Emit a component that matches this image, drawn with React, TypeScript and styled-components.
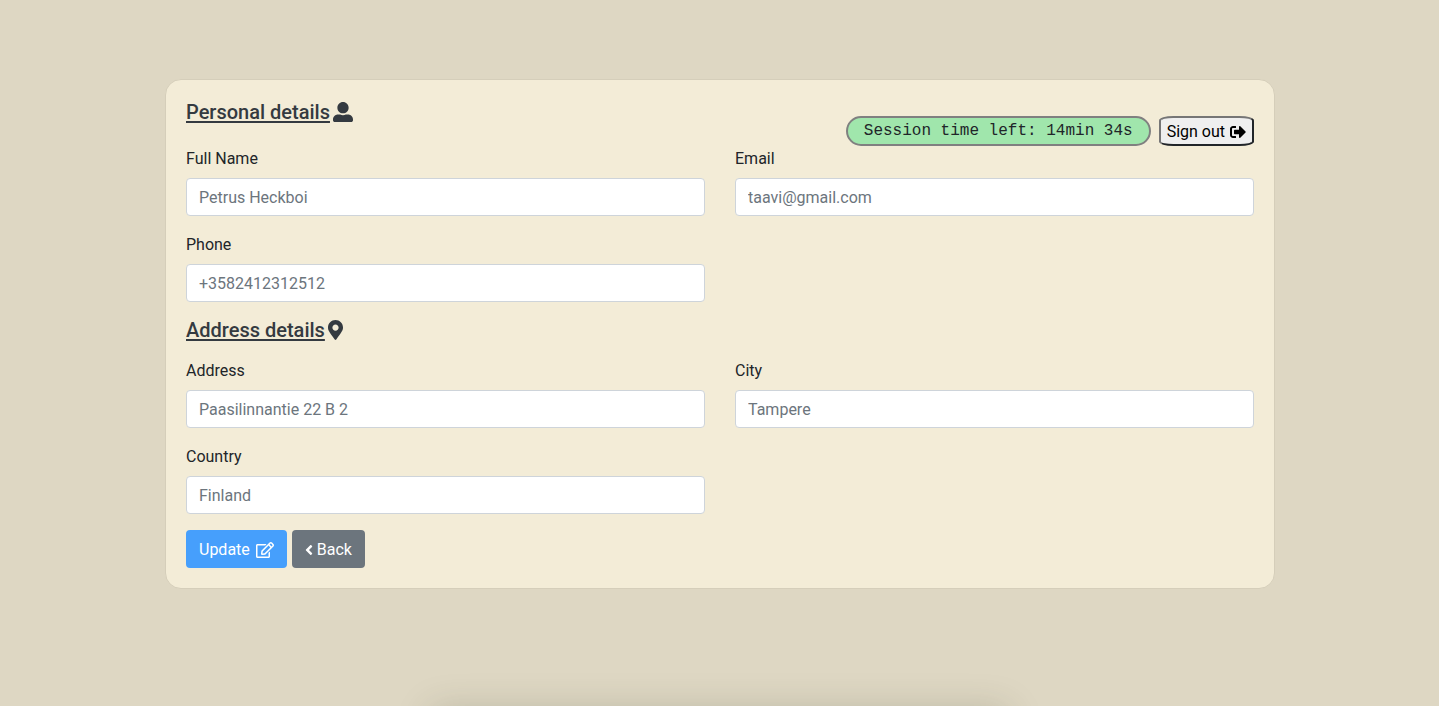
import type { FormEvent, ReactNode } from "react";
import styled, { createGlobalStyle } from "styled-components";
import { FaAngleLeft, FaMapMarkerAlt, FaRegEdit, FaSignOutAlt, FaUserAlt } from "react-icons/fa";

const GlobalStyle = createGlobalStyle`
  *, *::before, *::after { box-sizing: border-box; }
  html { height: 100%; }
  body {
    margin: 0;
    min-height: 100%;
    background: #ded7c3;
    color: #212529;
    font-family: Roboto, "Liberation Sans", sans-serif;
    font-size: 16px;
    line-height: 24px;
  }
`;

const Page = styled.div`
  position: relative;
  display: flex;
  justify-content: center;
  min-height: 100vh;
  padding: 79px 16px 79px 17px;
  overflow: hidden;
`;

const Card = styled.form`
  flex: 1;
  align-self: flex-start;
  max-width: 1110px;
  padding: 20px;
  background: #f3ecd7;
  border: 1px solid #d5ceba;
  border-radius: 16px;
`;

const Header = styled.header`
  display: flex;
  justify-content: space-between;
  min-height: 46px;
`;

const Heading = styled.h2`
  display: flex;
  align-items: center;
  gap: 3px;
  height: 24px;
  margin: 0;
  color: #343a40;
  font-size: 20px;
  font-weight: 500;
  line-height: 24px;
`;

const HeadingText = styled.span`
  text-decoration: underline;
  text-decoration-thickness: 2px;
  text-underline-offset: 2px;
`;

const Glyph = styled.span<{ $width: number }>`
  display: flex;
  flex: none;
  svg {
    width: ${(p) => p.$width}px;
  }
`;

const Session = styled.div`
  display: flex;
  align-items: flex-end;
  gap: 8px;
`;

const Timer = styled.output`
  height: 30px;
  padding: 0 16px;
  background: #a0e6ac;
  border: 2px solid #808080;
  border-radius: 15px;
  font-family: "Courier New", "Liberation Mono", monospace;
  line-height: 26px;
`;

const SignOut = styled.button`
  display: flex;
  align-items: center;
  gap: 5px;
  height: 30px;
  padding: 1px 6px 0;
  background: #efefef;
  border: 2px solid;
  border-color: #767676 #212529 #212529 #767676;
  border-radius: 15%;
  color: #000;
  font: inherit;
`;

const Fields = styled.div`
  display: grid;
  grid-template-columns: 1fr 1fr;
  gap: 16px 30px;
  margin-bottom: 16px;
`;

const Section = styled.section`
  display: grid;
  gap: 16px;
`;

const FieldBox = styled.div`
  display: flex;
  flex-direction: column;
  gap: 7px;
`;

const Label = styled.label`
  padding-top: 1px;
`;

const Input = styled.input`
  width: 100%;
  height: 38px;
  padding: 6px 12px;
  background: #fff;
  border: 1px solid #ced4da;
  border-radius: 4px;
  color: #495057;
  font: inherit;
  &::placeholder { color: #6c757d; opacity: 1; }
`;

const Actions = styled.div`
  display: flex;
  gap: 5px;
`;

const Button = styled.button<{ $tone: string; $gap: number }>`
  display: flex;
  align-items: center;
  gap: ${(p) => p.$gap}px;
  height: 38px;
  padding: 1px 13px 0;
  background: ${(p) => p.$tone};
  border: 0;
  border-radius: 4px;
  color: #fff;
  font: inherit;
`;

const DockShadow = styled.div`
  position: absolute;
  top: 100%;
  left: 30%;
  right: 30%;
  height: 40px;
  box-shadow: 0 4px 36px rgba(60, 64, 40, 0.22);
`;

type FieldProps = { id: string; label: string; placeholder: string; type?: string };

function Field({ id, label, placeholder, type = "text" }: FieldProps) {
  return (
    <FieldBox>
      <Label htmlFor={id}>{label}</Label>
      <Input id={id} type={type} placeholder={placeholder} />
    </FieldBox>
  );
}

function Title({ children, icon }: { children: string; icon: ReactNode }) {
  return (
    <Heading>
      <HeadingText>{children}</HeadingText>
      {icon}
    </Heading>
  );
}

export default function App() {
  const submit = (event: FormEvent) => event.preventDefault();
  return (
    <>
      <GlobalStyle />
      <Page>
        <Card onSubmit={submit}>
          <Header>
            <Title icon={<Glyph $width={20}><FaUserAlt /></Glyph>}>Personal details</Title>
            <Session>
              <Timer>Session time left: 14min 34s</Timer>
              <SignOut type="button">
                Sign out <Glyph $width={16}><FaSignOutAlt /></Glyph>
              </SignOut>
            </Session>
          </Header>
          <Fields>
            <Field id="name" label="Full Name" placeholder="Petrus Heckboi" />
            <Field id="email" label="Email" placeholder="taavi@gmail.com" type="email" />
            <Field id="phone" label="Phone" placeholder="+3582412312512" type="tel" />
          </Fields>
          <Section>
            <Title icon={<Glyph $width={15}><FaMapMarkerAlt /></Glyph>}>Address details</Title>
            <Fields>
              <Field id="address" label="Address" placeholder="Paasilinnantie 22 B 2" />
              <Field id="city" label="City" placeholder="Tampere" />
              <Field id="country" label="Country" placeholder="Finland" />
            </Fields>
          </Section>
          <Actions>
            <Button type="submit" $tone="#469ffc" $gap={6}>
              Update <Glyph $width={18}><FaRegEdit /></Glyph>
            </Button>
            <Button type="button" $tone="#6c757d" $gap={4}>
              <Glyph $width={8}><FaAngleLeft /></Glyph> Back
            </Button>
          </Actions>
        </Card>
        <DockShadow />
      </Page>
    </>
  );
}
